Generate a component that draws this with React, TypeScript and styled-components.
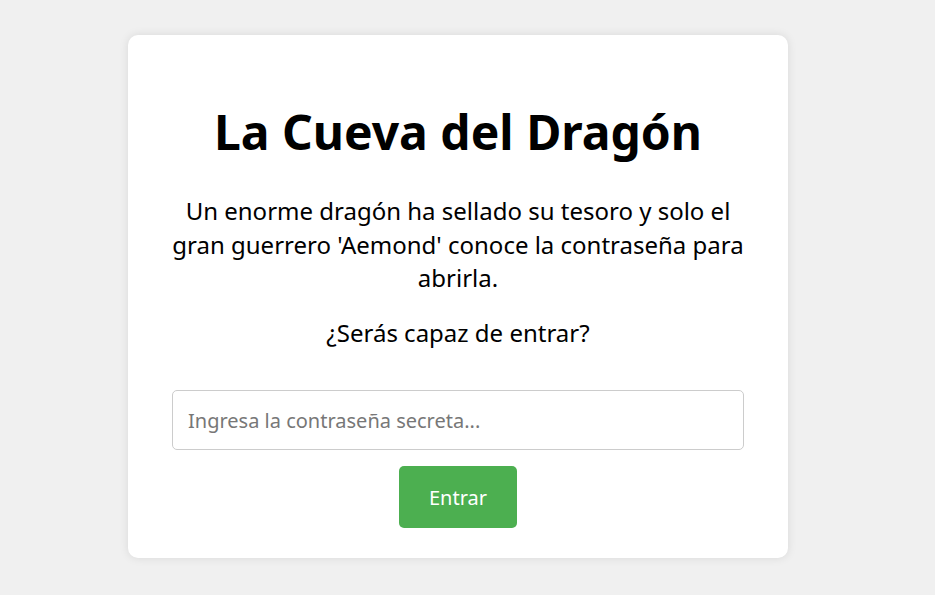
import React, {useState} from 'react';
import styled, {createGlobalStyle} from 'styled-components';

const GlobalStyle = createGlobalStyle`
  body {
    margin: 0;
    background: #f0f0f0;
    font-family: "Noto Sans", "Open Sans", sans-serif;
    color: #000;
  }
`;

const Page = styled.div`
  min-height: 595px;
  padding: 35px 0 0 128px;
  box-sizing: border-box;
`;

const Card = styled.section`
  width: 660px;
  height: 523px;
  box-sizing: border-box;
  background: #fff;
  border-radius: 10px;
  box-shadow: 0 0 10px rgba(0, 0, 0, 0.1);
  padding: 44px 44px 30px;
  display: flex;
  flex-direction: column;
  align-items: center;
  text-align: center;
`;

const Title = styled.h1`
  margin: 20px 0 0;
  font-size: 48px;
  font-weight: 700;
  line-height: 66px;
`;

const Text = styled.p<{$top: number}>`
  margin: ${({$top}) => $top}px 0 0;
  font-size: 24px;
  line-height: 33.5px;
`;

const Input = styled.input`
  width: 100%;
  height: 60px;
  margin-top: 41px;
  box-sizing: border-box;
  border: 1px solid #ccc;
  border-radius: 5px;
  padding: 0 15px;
  font-family: inherit;
  font-size: 20px;
  color: #333;
  &::placeholder {
    color: #777;
  }
`;

const Button = styled.button`
  margin-top: 16px;
  width: 118px;
  height: 62px;
  border: none;
  border-radius: 5px;
  background: #4caf50;
  color: #fff;
  font-family: inherit;
  font-size: 20px;
  cursor: pointer;
`;

export default function App() {
  const [value, setValue] = useState('');

  return (
    <Page>
      <GlobalStyle />
      <Card>
        <Title>La Cueva del Dragón</Title>
        <Text $top={29}>
          Un enorme dragón ha sellado su tesoro y solo el gran guerrero 'Aemond' conoce la contraseña para abrirla.
        </Text>
        <Text $top={21}>¿Serás capaz de entrar?</Text>
        <Input
          type="password"
          value={value}
          onChange={e => setValue(e.target.value)}
          placeholder="Ingresa la contraseña secreta..."
        />
        <Button type="button">Entrar</Button>
      </Card>
    </Page>
  );
}
